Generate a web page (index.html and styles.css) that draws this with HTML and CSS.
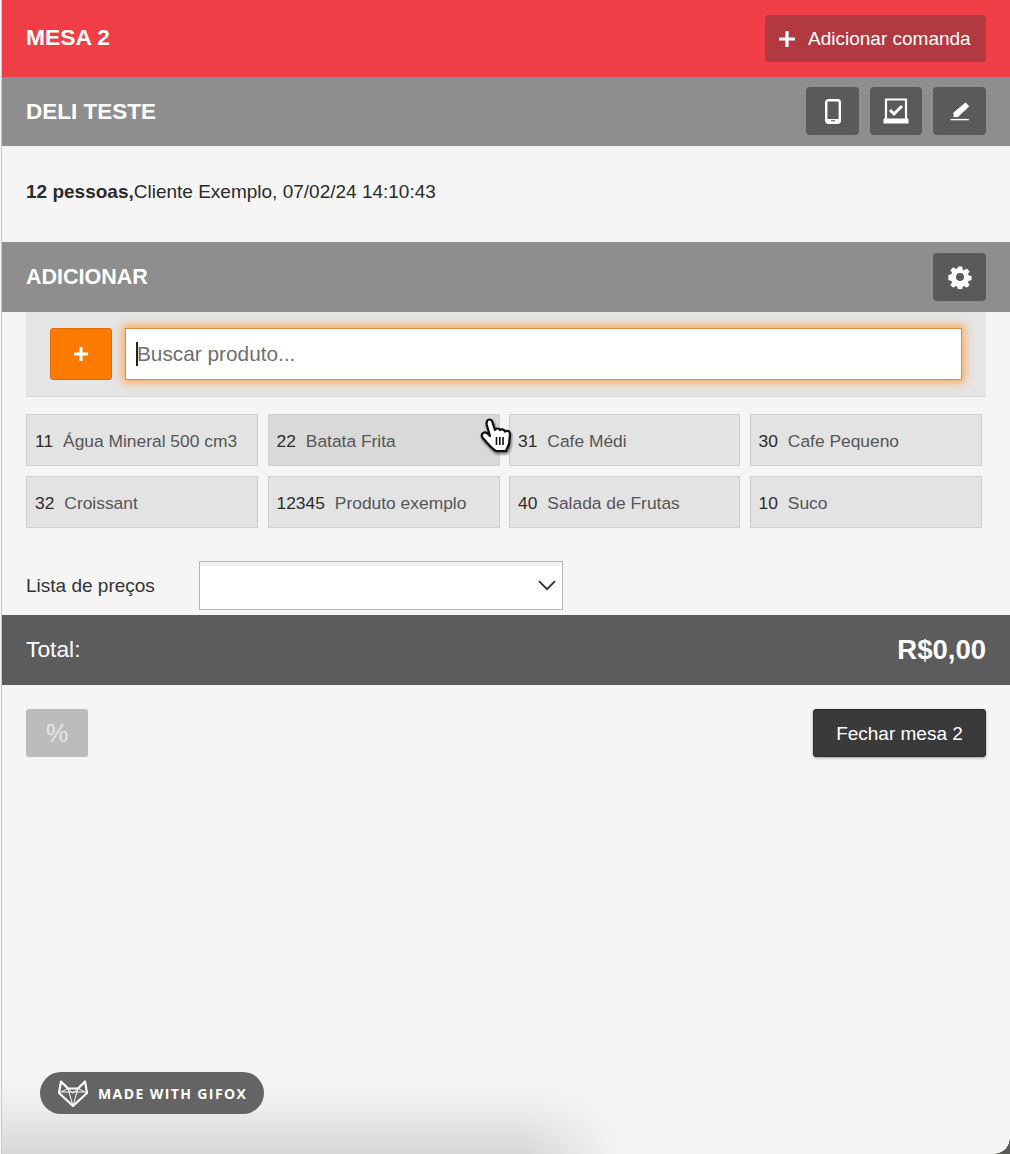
FILE: index.html
```html
<!DOCTYPE html>
<html lang="pt-BR">
<head>
<meta charset="utf-8">
<title>Mesa 2</title>
<link rel="stylesheet" href="styles.css">
</head>
<body>
<div class="page">
  <header class="bar bar-red">
    <h1 class="bar-title">MESA 2</h1>
    <button class="add-order" type="button">
      <svg class="add-order-icon" viewBox="0 0 16 16"><path d="M8 0v16M0 8h16" fill="none" stroke="#fff" stroke-width="3.200"/></svg>
      <span>Adicionar comanda</span>
    </button>
  </header>

  <section class="bar bar-gray bar-deli">
    <h2 class="bar-title">DELI TESTE</h2>
    <div class="tools">
      <button class="tool" type="button" aria-label="Celular">
        <svg width="16" height="25" viewBox="0 0 16 25"><rect x="1.200" y="1.200" width="13.600" height="22.600" rx="2.200" fill="none" stroke="#fff" stroke-width="2.400"/><rect x="1" y="20" width="14" height="4" fill="#fff"/><rect x="6" y="21.200" width="4" height="1.200" fill="#666"/></svg>
      </button>
      <button class="tool tool-mid" type="button" aria-label="Conferir">
        <svg width="26" height="26" viewBox="0 0 26 26"><path d="M3 21V1.500h20V21" fill="none" stroke="#fff" stroke-width="2.200"/><path d="M.5 20.500h25v5H.5z" fill="#fff"/><path d="M7 12l4 4 8-8" fill="none" stroke="#fff" stroke-width="3"/></svg>
      </button>
      <button class="tool" type="button" aria-label="Editar">
        <svg width="20" height="19" viewBox="0 0 20 19"><path d="M15.500.5l3.800 3.800L8 15H3.500v-4.500z" fill="#fff"/><path d="M.5 17.600h18.400" stroke="#fff" stroke-width="1.400"/></svg>
      </button>
    </div>
  </section>

  <p class="info"><strong>12 pessoas,</strong>Cliente Exemplo, 07/02/24 14:10:43</p>

  <section class="bar bar-gray bar-add">
    <h2 class="bar-title">ADICIONAR</h2>
    <button class="tool" type="button" aria-label="Configurações">
      <svg width="24" height="24" viewBox="0 0 24 24"><path fill="#fff" fill-rule="evenodd" d="M9.800 1h4.400l.6 3.100 1.700.7 2.600-1.800 3.100 3.100-1.800 2.600.7 1.700 3.100.6v4.400l-3.100.6-.7 1.700 1.800 2.600-3.100 3.100-2.600-1.800-1.700.7-.6 3.100H9.800l-.6-3.100-1.700-.7-2.600 1.800-3.100-3.100 1.800-2.600-.7-1.700-3.100-.6V9.800l3.100-.6.7-1.700-1.800-2.600L5 1.800l2.600 1.800 1.700-.7zM12 7.800a4.200 4.200 0 1 0 0 8.400 4.200 4.200 0 0 0 0-8.400z" transform="translate(.6 .6) scale(.95)"/></svg>
    </button>
  </section>

  <div class="search-panel">
    <button class="search-add" type="button">
      <svg width="16" height="16" viewBox="0 0 16 16"><path d="M8 1v14M1 8h14" fill="none" stroke="#fff" stroke-width="3"/></svg>
    </button>
    <div class="search-field"><i class="caret"></i><span>Buscar produto...</span></div>
  </div>

  <div class="products">
    <div class="product"><b>11</b><span>Água Mineral 500 cm3</span></div>
    <div class="product product-hover"><b>22</b><span>Batata Frita</span>
      <svg class="cursor" width="34" height="40" viewBox="0 0 34 40">
        <defs><filter id="cursor-shadow" x="-30%" y="-30%" width="160%" height="160%"><feDropShadow dx="1" dy="2" stdDeviation="1.500" flood-color="#000" flood-opacity=".6"/></filter></defs>
        <path filter="url(#cursor-shadow)" d="M8 5c1-2 4-2 5 0l3 9c1-2 4-2 5 0 1-1 4-1 5 1.500 2-1.500 5-.5 5 2.500l-1 10-3 7H17c-4-2-9-8-14-14-1-3 2-6 5-4l3 3-3.500-12z" fill="#fff" stroke="#111" stroke-width="2.200" stroke-linejoin="round"/>
        <path d="M17.500 21v8M20.800 21v8M24.100 21v8" stroke="#111" stroke-width="1.600"/>
      </svg>
    </div>
    <div class="product"><b>31</b><span>Cafe Médi</span></div>
    <div class="product"><b>30</b><span>Cafe Pequeno</span></div>
    <div class="product"><b>32</b><span>Croissant</span></div>
    <div class="product"><b>12345</b><span>Produto exemplo</span></div>
    <div class="product"><b>40</b><span>Salada de Frutas</span></div>
    <div class="product"><b>10</b><span>Suco</span></div>
  </div>

  <div class="price-list">
    <label class="price-label">Lista de preços</label>
    <div class="price-select">
      <svg width="18" height="11" viewBox="0 0 18 11"><path d="M1 1.200l8 8 8-8" fill="none" stroke="#333" stroke-width="1.900"/></svg>
    </div>
  </div>

  <div class="total">
    <span class="total-label">Total:</span>
    <strong class="total-value">R$0,00</strong>
  </div>

  <div class="actions">
    <button class="discount" type="button">%</button>
    <button class="close-table" type="button">Fechar mesa 2</button>
  </div>
</div>

<div class="bottom-shade"></div>
<div class="corner"></div>

<div class="gifox">
  <svg width="30" height="27" viewBox="0 0 30 27">
    <g fill="none" stroke="#fff" stroke-linejoin="round">
      <path d="M3 1.500l7 7h10l7-7 2 11.500-14 13L1 13z" stroke-width="2.200"/>
      <path d="M10 8.500l5 5 5-5M1 13l9-4.500 5 17.500M29 13l-9-4.500-5 17.500M4 12h22" stroke-width="1"/>
    </g>
  </svg>
  <span>MADE WITH GIFOX</span>
</div>
</body>
</html>
```

FILE: styles.css
```css
* { box-sizing: border-box; }
html, body { margin: 0; height: 100%; }
body {
  position: relative;
  height: 1154px;
  overflow: hidden;
  background: #f5f5f5;
  font-family: "Liberation Sans", Arial, sans-serif;
  color: #2b2b2b;
}
button { font-family: inherit; cursor: pointer; }

.page {
  height: 1154px;
  margin-left: 2px;
  position: relative;
  box-shadow: -1px 0 0 #c9c9c9;
}

.bar {
  display: flex;
  align-items: center;
  justify-content: space-between;
  padding: 0 24px;
  color: #fff;
}
.bar-red { height: 77px; background: #f03e46; }
.bar-gray { height: 69px; background: #8e8e8e; }
.bar-deli { padding-bottom: 1px; }
.bar-deli .bar-title { padding-top: 1px; }
.bar-add { height: 70px; }
.bar-title { margin: 0; font-size: 22.500px; font-weight: 700; }
.bar-red .bar-title { font-size: 22.800px; margin-bottom: 3px; }
.bar-add .bar-title { font-size: 21.500px; }

.add-order {
  display: flex;
  align-items: center;
  gap: 13px;
  width: 221px;
  height: 47px;
  padding: 0 0 0 14px;
  border: 0;
  border-radius: 4px;
  background: #b1393f;
  color: #fff;
  font-size: 19px;
}
.add-order-icon { width: 16px; height: 16px; }

.tools { display: flex; gap: 11px; }
.tool {
  display: flex;
  align-items: center;
  justify-content: center;
  width: 53px;
  height: 48px;
  padding: 0;
  border: 0;
  border-radius: 4px;
  background: #5a5a5a;
}
.tool-mid { width: 52px; }

.info { margin: 0; height: 96px; padding: 35px 24px 0; font-size: 19px; line-height: 22px; }

.search-panel {
  display: flex;
  gap: 13px;
  height: 85px;
  margin: 0 24px;
  padding: 16px 24px 0;
  background: #e5e5e5;
  border-bottom: 1px solid #d8d8d8;
}
.search-add {
  display: flex;
  align-items: center;
  justify-content: center;
  flex: none;
  width: 62px;
  height: 52px;
  padding: 0;
  border: 1px solid #d96d0a;
  border-radius: 3px;
  background: #ff7a00;
}
.search-field {
  display: flex;
  align-items: center;
  flex: 1;
  height: 52px;
  padding-left: 10px;
  background: #fff;
  border: 1px solid #e08a4a;
  box-shadow: 0 0 8px 3px rgba(255, 160, 70, .8);
  font-size: 20.800px;
  color: #6f6f6f;
}
.caret { width: 2px; height: 24px; background: #222; margin-right: -1px; }

.products {
  display: grid;
  grid-template-columns: 232px 232px 231px 232px;
  grid-auto-rows: 52px;
  column-gap: 9.500px;
  row-gap: 10px;
  margin: 17px 0 0 24px;
}
.product {
  position: relative;
  display: flex;
  align-items: center;
  gap: 10px;
  padding: 3px 8px 0;
  background: #e3e3e3;
  border: 1px solid #cfcfcf;
  font-size: 17.400px;
  color: #555;
  white-space: nowrap;
}
.product b { font-weight: 400; color: #2b2b2b; }
.product-hover { background: #d9d9d9; }
.cursor { position: absolute; right: -14px; top: 1px; z-index: 2; }

.price-list {
  display: flex;
  align-items: center;
  margin: 33px 0 0 24px;
  height: 49px;
}
.price-label { width: 173px; font-size: 19px; color: #333; }
.price-select {
  display: flex;
  align-items: center;
  justify-content: flex-end;
  width: 364px;
  height: 49px;
  padding-right: 6px;
  background: linear-gradient(#f3f3f3 4px, #fff 4px);
  border: 1px solid #b5b5b5;
}

.total {
  display: flex;
  align-items: center;
  justify-content: space-between;
  height: 70px;
  margin-top: 5px;
  padding: 0 24px;
  background: #5c5c5c;
  color: #fff;
}
.total-label { font-size: 22.800px; margin-bottom: 2px; }
.total-value { font-size: 27.500px; }

.actions {
  display: flex;
  justify-content: space-between;
  margin-top: 24px;
  padding: 0 24px;
}
.discount {
  width: 62px;
  height: 48px;
  padding: 0;
  border: 0;
  border-radius: 3px;
  background: #bcbdbb;
  color: #e6e6e6;
  font-size: 25px;
}
.close-table {
  width: 173px;
  height: 48px;
  padding: 2px 0 0;
  border: 1px solid #2b2b2b;
  border-radius: 3px;
  background: #3a3a3a;
  color: #fff;
  font-size: 19px;
  box-shadow: 0 1px 3px rgba(0, 0, 0, .35);
}

.bottom-shade {
  position: absolute;
  left: 2px;
  bottom: 0;
  width: 620px;
  height: 76px;
  background: linear-gradient(rgba(0, 0, 0, 0), rgba(0, 0, 0, .03) 40%, rgba(0, 0, 0, .12));
  -webkit-mask-image: linear-gradient(to right, #000 84%, transparent);
  mask-image: linear-gradient(to right, #000 84%, transparent);
}
.corner {
  position: absolute;
  right: 0;
  bottom: 0;
  width: 16px;
  height: 16px;
  background: radial-gradient(circle at 0 0, transparent 15.500px, #5b5a57 16px);
}

.gifox {
  position: absolute;
  left: 40px;
  top: 1072px;
  display: flex;
  align-items: center;
  gap: 10px;
  width: 224px;
  height: 42px;
  padding-left: 18px;
  border-radius: 21px;
  background: #646464;
  color: #fff;
  font-family: "Open Sans", "Liberation Sans", sans-serif;
  font-size: 14px;
  font-weight: 700;
  letter-spacing: 1.400px;
  white-space: nowrap;
}
```
